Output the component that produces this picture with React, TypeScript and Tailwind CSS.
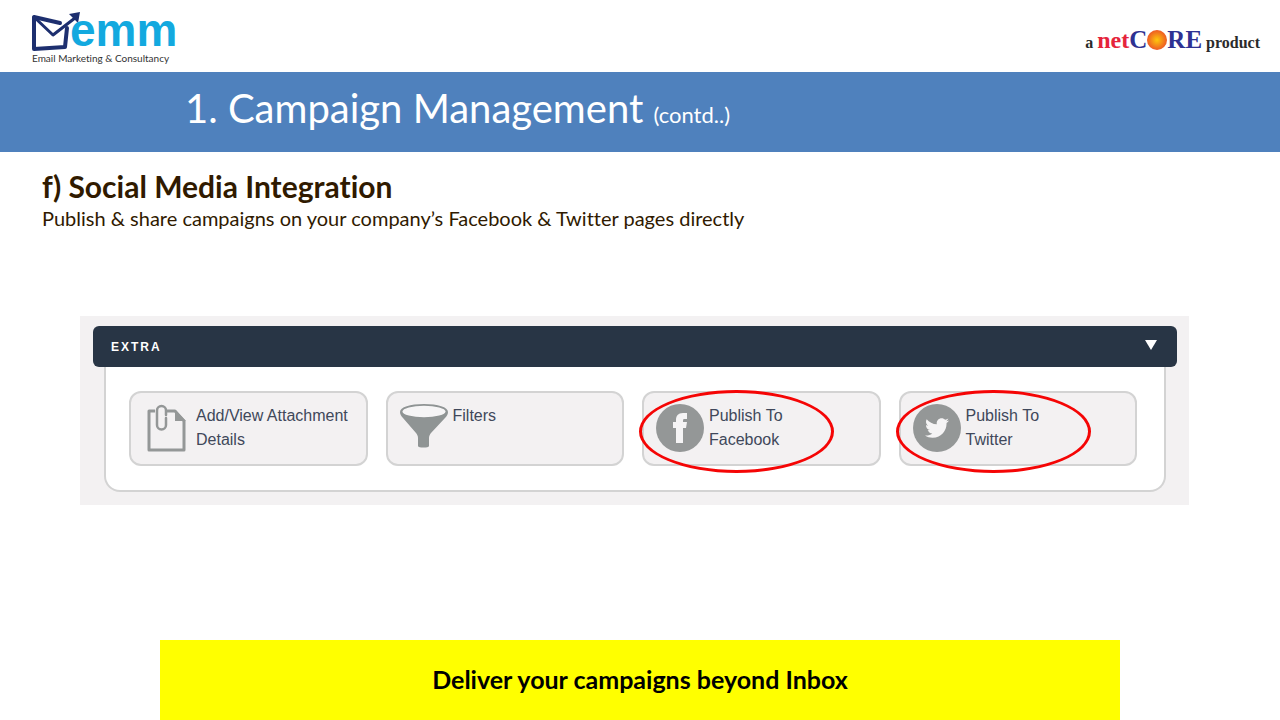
import type { ReactNode } from "react";
import { FaTwitter } from "react-icons/fa";

type Action = {
  label: string;
  icon: ReactNode;
  highlighted?: boolean;
};

const actions: Action[] = [
  { label: "Add/View Attachment\nDetails", icon: <AttachmentIcon /> },
  { label: "Filters", icon: <FunnelIcon /> },
  { label: "Publish To\nFacebook", icon: <FacebookIcon />, highlighted: true },
  { label: "Publish To\nTwitter", icon: <TwitterIcon />, highlighted: true },
];

function AttachmentIcon() {
  return (
    <svg viewBox="0 0 48 52" className="h-[52px] w-12" fill="none" stroke="#949797" strokeWidth="3">
      <path d="M12 7H6v39h35V17L32 7H23" strokeLinejoin="round" />
      <path d="M32 6l11 11H32z" fill="#949797" stroke="none" />
      <path d="M23 11V6.500a4.500 4.500 0 0 0-9 0V21a4.500 4.500 0 0 0 9 0v-7" strokeWidth="2.500" strokeLinecap="round" />
    </svg>
  );
}

function FunnelIcon() {
  return (
    <svg viewBox="0 0 48 48" className="size-12" fill="#8f9494">
      <path d="M0 8C0 3 10 0 24 0s24 3 24 8c0 2-1 4-3 6L31 29c-1 1-2 3-2 5v8c0 2-11 2-11 0v-8c0-2-1-4-2-5L3 14C1 12 0 10 0 8z" />
      <ellipse cx="24" cy="7.500" rx="21.500" ry="5.700" fill="#f6f5f6" />
    </svg>
  );
}

function FacebookIcon() {
  return (
    <svg viewBox="0 0 48 48" className="size-12">
      <circle cx="24" cy="24" r="24" fill="#949797" />
      <path d="M20 39V24h-3v-6h3v-2c0-4 2-7 7-7h4v6h-3c-1 0-1 1-1 3h4l-1 6h-3v15z" fill="#f5f4f5" />
    </svg>
  );
}

function TwitterIcon() {
  return (
    <span className="flex size-12 items-center justify-center rounded-full bg-[#949797]">
      <FaTwitter className="size-6 text-[#f5f4f5]" />
    </span>
  );
}

function EmmLogo() {
  return (
    <div className="w-36 pt-1">
      <div className="flex h-10 items-start">
        <svg viewBox="0 0 50 40" className="h-10 w-[50px] shrink-0" fill="none" stroke="#1d2f6f" strokeWidth="3">
          <path d="M28 11L2 5v32l31-2 2-19" strokeLinejoin="round" strokeLinecap="round" strokeWidth="4" />
          <path d="M2 5l19 18L43 6" strokeLinejoin="round" />
          <path d="M37 2l11-2-2 11z" fill="#1d2f6f" stroke="none" />
        </svg>
        <span className="-ml-3 font-['Liberation_Sans'] text-[46px] leading-9 font-bold text-[#13a9df]">emm</span>
      </div>
      <p className="text-[10px] leading-3 whitespace-nowrap text-[#333]">Email Marketing &amp; Consultancy</p>
    </div>
  );
}

function NetcoreLogo() {
  return (
    <p className="flex items-baseline pt-2 font-['Liberation_Serif',serif] text-base font-bold whitespace-nowrap text-[#2b2b2b]">
      <span className="mr-1">a</span>
      <span className="text-2xl leading-8 text-[#e5243b]">net</span>
      <span className="flex items-baseline text-[25px] leading-8 text-[#2e3192]">
        C
        <svg viewBox="0 0 20 20" className="size-5 self-center" role="img" aria-label="O">
          <defs>
            <radialGradient id="sun">
              <stop offset="0" stopColor="#fdc70c" />
              <stop offset="1" stopColor="#ee5a24" />
            </radialGradient>
          </defs>
          <circle cx="10" cy="10" r="10" fill="url(#sun)" />
        </svg>
        RE
      </span>
      <span className="ml-1">product</span>
    </p>
  );
}

function ActionCard({ label, icon, highlighted }: Action) {
  return (
    <button
      type="button"
      className="relative flex h-[75px] items-start rounded-xl border-2 border-[#d3d3d3] bg-[#f3f1f2] pt-[11px] pl-3 text-left"
    >
      <span className="shrink-0">{icon}</span>
      <span className="ml-[5px] text-base leading-6 whitespace-pre-line text-[#40485a]">{label}</span>
      {highlighted && (
        <span className="absolute -top-[3px] -left-[5px] h-[83px] w-[195px] rounded-[50%] border-3 border-[#f50505]" />
      )}
    </button>
  );
}

function ExtraPanel() {
  return (
    <section className="mt-[84px] mr-[91px] ml-20 bg-[#f3f1f2] pt-[10px] pr-3 pb-[13px] pl-[13px] font-['Liberation_Sans',sans-serif]">
      <button
        type="button"
        className="flex h-[41px] w-full items-center justify-between rounded-md bg-[#283545] pr-5 pl-[18px] text-white"
      >
        <span className="text-xs font-bold tracking-[2px]">EXTRA</span>
        <svg viewBox="0 0 12 10" className="mb-1 h-[10px] w-3" fill="white">
          <path d="M0 0h12L6 10z" />
        </svg>
      </button>
      <div className="mx-[11px] grid grid-cols-4 gap-[18px] rounded-b-2xl border-2 border-t-0 border-[#d3d3d3] bg-white pt-6 pr-[27px] pb-6 pl-[23px]">
        {actions.map((action) => (
          <ActionCard key={action.label} {...action} />
        ))}
      </div>
    </section>
  );
}

export default function App() {
  return (
    <div className="flex min-h-screen flex-col bg-white font-[Lato,sans-serif] [font-variant-ligatures:none]">
      <header className="flex h-[72px] items-center justify-between pr-5 pl-8">
        <EmmLogo />
        <NetcoreLogo />
      </header>
      <div className="h-20 bg-[#4f81bd] pt-3 pl-[185px] text-white">
        <h1 className="text-[40px] leading-[48px]">
          1. Campaign Management <span className="text-[22px]">(contd..)</span>
        </h1>
      </div>
      <main className="text-[#301a00]">
        <div className="px-[42px] pt-4">
          <h2 className="text-3xl leading-9 font-bold">f) Social Media Integration</h2>
          <p className="text-xl leading-7">Publish &amp; share campaigns on your company’s Facebook &amp; Twitter pages directly</p>
        </div>
        <ExtraPanel />
      </main>
      <footer className="mx-40 mt-auto flex h-20 items-center justify-center bg-[#ffff00] text-[25px] font-bold text-black">
        Deliver your campaigns beyond Inbox
      </footer>
    </div>
  );
}
